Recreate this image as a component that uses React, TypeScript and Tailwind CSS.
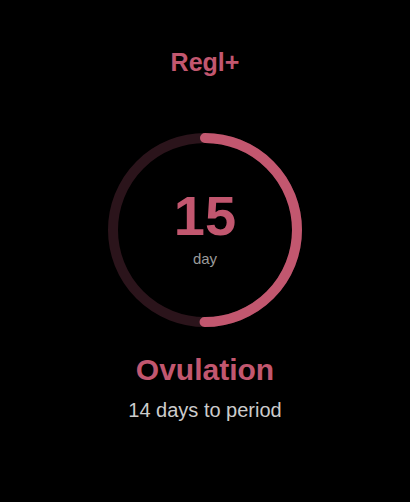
import React from "react";

export default function App() {
  const r = 92;
  const c = 2 * Math.PI * r;
  const progress = 0.5;
  return (
    <div className="w-[410px] h-[502px] bg-black flex flex-col items-center" style={{ fontFamily: '"Liberation Sans", Arial, sans-serif' }}>
      <div className="mt-[47px] text-[25px] leading-[30px] font-bold text-[#c2576f]">Regl+</div>
      <div className="relative mt-[56px] w-[194px] h-[194px]">
        <svg width="194" height="194" viewBox="0 0 194 194" className="absolute inset-0">
          <circle cx="97" cy="97" r={r} fill="none" stroke="#2b141b" strokeWidth="10" />
          <circle
            cx="97"
            cy="97"
            r={r}
            fill="none"
            stroke="#c2576f"
            strokeWidth="10"
            strokeLinecap="round"
            strokeDasharray={`${c * progress} ${c}`}
            transform="rotate(-90 97 97)"
          />
        </svg>
        <div className="absolute inset-0 flex flex-col items-center justify-center">
          <div className="text-[56px] leading-[56px] font-bold text-[#c2576f] mt-[-4px]">15</div>
          <div className="text-[15px] leading-[18px] text-[#9a9a9a] mt-[6px]">day</div>
        </div>
      </div>
      <div className="mt-[26px] text-[30px] leading-[34px] font-bold text-[#c2576f]">Ovulation</div>
      <div className="mt-[11px] text-[20px] leading-[24px] text-[#cccccc]">14 days to period</div>
    </div>
  );
}
